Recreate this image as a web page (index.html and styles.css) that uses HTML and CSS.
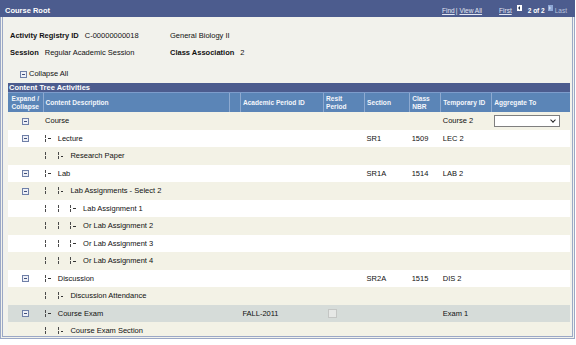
FILE: index.html
```html
<!DOCTYPE html>
<html lang="en">
<head>
<meta charset="UTF-8">
<title>Course Root</title>
<link rel="stylesheet" href="styles.css">
</head>
<body>
<div class="page">
    <div class="titlebar">
        <span class="title">Course Root</span>
        <div class="nav">
            <a href="#">Find</a><span class="sep">|</span><a href="#">View All</a>
            <a href="#" class="first">First</a>
            <span class="navbtn prev"></span>
            <span class="count">2 of 2</span>
            <span class="navbtn next"></span>
            <span class="last">Last</span>
        </div>
    </div>

    <div class="content">
        <div class="info">
            <div class="field"><b>Activity Registry ID</b><span>C-00000000018</span></div>
            <div class="field"><span>General Biology II</span></div>
            <div class="field"><b>Session</b><span>Regular Academic Session</span></div>
            <div class="field"><b>Class Association</b><span>2</span></div>
        </div>

        <div class="collapse-all"><span class="exp"></span>Collapse All</div>

        <div class="grid">
            <div class="grid-title">Content Tree Activities</div>
            <table>
                <colgroup>
                    <col style="width:35px">
                    <col style="width:186px">
                    <col style="width:11px">
                    <col style="width:83px">
                    <col style="width:41px">
                    <col style="width:45px">
                    <col style="width:31px">
                    <col style="width:51px">
                    <col style="width:78px">
                </colgroup>
                <thead>
                    <tr>
                        <th class="center">Expand /<br>Collapse</th>
                        <th>Content Description</th>
                        <th></th>
                        <th>Academic Period ID</th>
                        <th>Resit<br>Period</th>
                        <th>Section</th>
                        <th>Class<br>NBR</th>
                        <th>Temporary ID</th>
                        <th>Aggregate To</th>
                    </tr>
                </thead>
                <tbody>
                    <tr>
                        <td class="center"><span class="exp"></span></td>
                        <td>Course</td>
                        <td></td><td></td><td></td><td></td><td></td>
                        <td>Course 2</td>
                        <td><div class="select"><span class="chev"></span></div></td>
                    </tr>
                    <tr>
                        <td class="center"><span class="exp"></span></td>
                        <td><span class="tree leaf"></span>Lecture</td>
                        <td></td><td></td><td></td>
                        <td>SR1</td><td>1509</td><td>LEC 2</td><td></td>
                    </tr>
                    <tr>
                        <td></td>
                        <td><span class="tree"></span><span class="tree leaf"></span>Research Paper</td>
                        <td></td><td></td><td></td><td></td><td></td><td></td><td></td>
                    </tr>
                    <tr>
                        <td class="center"><span class="exp"></span></td>
                        <td><span class="tree leaf"></span>Lab</td>
                        <td></td><td></td><td></td>
                        <td>SR1A</td><td>1514</td><td>LAB 2</td><td></td>
                    </tr>
                    <tr>
                        <td class="center"><span class="exp"></span></td>
                        <td><span class="tree"></span><span class="tree leaf"></span>Lab Assignments - Select 2</td>
                        <td></td><td></td><td></td><td></td><td></td><td></td><td></td>
                    </tr>
                    <tr>
                        <td></td>
                        <td><span class="tree"></span><span class="tree"></span><span class="tree leaf"></span>Lab Assignment 1</td>
                        <td></td><td></td><td></td><td></td><td></td><td></td><td></td>
                    </tr>
                    <tr>
                        <td></td>
                        <td><span class="tree"></span><span class="tree"></span><span class="tree leaf"></span>Or Lab Assignment 2</td>
                        <td></td><td></td><td></td><td></td><td></td><td></td><td></td>
                    </tr>
                    <tr>
                        <td></td>
                        <td><span class="tree"></span><span class="tree"></span><span class="tree leaf"></span>Or Lab Assignment 3</td>
                        <td></td><td></td><td></td><td></td><td></td><td></td><td></td>
                    </tr>
                    <tr>
                        <td></td>
                        <td><span class="tree"></span><span class="tree"></span><span class="tree leaf"></span>Or Lab Assignment 4</td>
                        <td></td><td></td><td></td><td></td><td></td><td></td><td></td>
                    </tr>
                    <tr>
                        <td class="center"><span class="exp"></span></td>
                        <td><span class="tree leaf"></span>Discussion</td>
                        <td></td><td></td><td></td>
                        <td>SR2A</td><td>1515</td><td>DIS 2</td><td></td>
                    </tr>
                    <tr>
                        <td></td>
                        <td><span class="tree"></span><span class="tree leaf"></span>Discussion Attendance</td>
                        <td></td><td></td><td></td><td></td><td></td><td></td><td></td>
                    </tr>
                    <tr class="selected">
                        <td class="center"><span class="exp"></span></td>
                        <td><span class="tree leaf"></span>Course Exam</td>
                        <td></td>
                        <td>FALL-2011</td>
                        <td><span class="check"></span></td>
                        <td></td><td></td>
                        <td>Exam 1</td><td></td>
                    </tr>
                    <tr>
                        <td></td>
                        <td><span class="tree"></span><span class="tree leaf"></span>Course Exam Section</td>
                        <td></td><td></td><td></td><td></td><td></td><td></td><td></td>
                    </tr>
                </tbody>
            </table>
        </div>
    </div>
</div>
</body>
</html>
```

FILE: styles.css
```css
body {
    margin: 0;
    background-color: #ffffff;
    font-family: 'Liberation Sans', Arial, sans-serif;
    font-size: 7.5px;
    color: #111111;
}
.page {
    width: 575px;
    height: 339px;
    box-sizing: border-box;
    border: 3px double #9ba8c6;
    border-top: none;
    background-color: #f2f2ec;
    display: flex;
    flex-direction: column;
}
.titlebar {
    flex-shrink: 0;
    height: 17px;
    box-sizing: border-box;
    margin: 0 -3px;
    background-color: #4c5c8e;
    display: flex;
    align-items: center;
    justify-content: space-between;
    padding: 4px 8px 0 5px;
    color: #ffffff;
}
.title {
    font-weight: bold;
}
.nav {
    display: flex;
    align-items: center;
    font-size: 6.5px;
}
.nav a {
    color: #e2e6f2;
}
.nav .sep {
    margin: 0 2px 0 1px;
    color: #e2e6f2;
}
.nav .first {
    margin-left: 17px;
}
.navbtn {
    display: inline-block;
    width: 5px;
    height: 6px;
    position: relative;
    margin-top: -5px;
}
.navbtn.prev {
    background-color: #ffffff;
    margin-left: 5px;
}
.navbtn.prev::after {
    content: '';
    position: absolute;
    left: 1.5px;
    top: 1px;
    border-style: solid;
    border-width: 2px 2px 2px 0;
    border-color: transparent #20304c transparent transparent;
}
.navbtn.next {
    background-color: #8ea8d6;
}
.navbtn.next::after {
    content: '';
    position: absolute;
    left: 1.5px;
    top: 1px;
    border-style: solid;
    border-width: 2px 0 2px 2px;
    border-color: transparent transparent transparent #c8d6ee;
}
.count {
    font-weight: bold;
    margin: 0 3px 0 6px;
}
.last {
    color: #b8c2dc;
    margin-left: 2px;
}
.content {
    flex: 1;
    min-height: 0;
    overflow: hidden;
    padding: 0 2px 0 5px;
    display: flex;
    flex-direction: column;
}
.info {
    display: grid;
    grid-template-columns: 160px auto;
    row-gap: 7px;
    padding: 14px 0 0 2px;
}
.field {
    display: flex;
    gap: 6px;
    line-height: 10px;
}
.collapse-all {
    margin: 11px 0 0 12px;
    display: flex;
    align-items: center;
    gap: 2px;
    line-height: 10px;
}
.exp {
    display: inline-block;
    width: 5px;
    height: 5px;
    border: 1px solid #6f80a8;
    background-color: #eef0f6;
    position: relative;
    vertical-align: middle;
}
.exp::after {
    content: '';
    position: absolute;
    left: 1px;
    top: 2px;
    width: 3px;
    height: 1px;
    background-color: #3e4e7c;
}
.grid {
    margin-top: 4px;
    width: 562px;
    flex-shrink: 0;
}
.grid-title {
    background-color: #4c5c8e;
    color: #ffffff;
    font-weight: bold;
    height: 9px;
    line-height: 9px;
    padding-left: 1px;
}
table {
    width: 562px;
    border-collapse: collapse;
    table-layout: fixed;
}
th {
    background-color: #5b85b7;
    color: #f4f6fb;
    font-size: 6.6px;
    font-weight: bold;
    text-align: left;
    height: 19px;
    padding: 0 2px;
    line-height: 7.5px;
    white-space: nowrap;
    border-left: 1px solid #8eaad0;
    border-top: 1px solid #7d9ccb;
    vertical-align: middle;
}
th:first-child {
    border-left: none;
}
th.center {
    text-align: center;
    padding: 0;
}
td {
    height: 17.5px;
    padding: 0 2px;
    white-space: nowrap;
    vertical-align: middle;
}
td.center {
    text-align: center;
}
tbody tr:nth-child(odd) td {
    background-color: #f3f2e6;
}
tbody tr:nth-child(even) td {
    background-color: #ffffff;
}
tbody tr.selected td {
    background-color: #d6dcd9;
}
.tree {
    display: inline-block;
    width: 12.7px;
    height: 7px;
    vertical-align: -1px;
    position: relative;
    background: linear-gradient(#4a4a4a 0 3px, transparent 3px 4px, #4a4a4a 4px 7px) no-repeat 0 0 / 1px 7px;
}
.tree.leaf::after {
    content: '';
    position: absolute;
    left: 3px;
    top: 3.5px;
    width: 2.5px;
    height: 1px;
    background-color: #333333;
}
.select {
    width: 64px;
    height: 10px;
    background-color: #ffffff;
    border: 1px solid #7f7f7f;
    position: relative;
}
.chev {
    position: absolute;
    right: 4px;
    top: 2px;
    width: 3px;
    height: 3px;
    border-right: 1.5px solid #222222;
    border-bottom: 1.5px solid #222222;
    transform: rotate(45deg);
}
.check {
    display: inline-block;
    width: 7px;
    height: 7px;
    border: 1px solid #c4c6c4;
    background-color: #e6e8e6;
    margin-left: 2px;
    vertical-align: middle;
}
```
